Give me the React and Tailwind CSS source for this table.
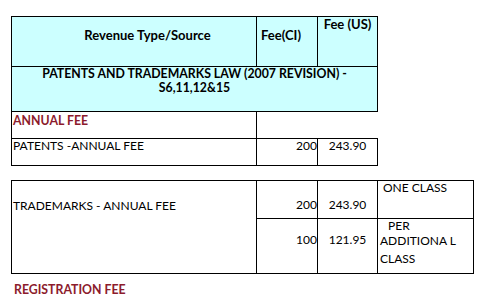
import React from "react";

const font = { fontFamily: "Lato, 'Liberation Sans', sans-serif" };

export default function App() {
  return (
    <div
      className="w-[484px] h-[305px] bg-white text-black pt-[16px] pl-[11px] text-[12px] leading-[14px] overflow-hidden"
      style={font}
    >
      {/* Table 1 */}
      <div className="grid grid-cols-[245px_61px_61px] w-[367px]">
        {/* Row A */}
        <div className="h-[50px] border-l border-t border-black bg-[#ccffff] font-bold text-[13px] text-center pl-[27px] pt-[11px]">
          Revenue Type/Source
        </div>
        <div className="h-[50px] border-l border-t border-black bg-[#ccffff] font-bold text-[13px] pl-[4px] pt-[11px]">
          Fee(CI)
        </div>
        <div className="h-[50px] border-l border-t border-r border-black bg-[#ccffff] font-bold text-[13px] text-center">
          Fee (US)
        </div>
        {/* Row B */}
        <div className="col-span-3 h-[45px] border-l border-t border-r border-black bg-[#ccffff] font-bold text-[12.3px] text-center">
          <div>PATENTS AND TRADEMARKS LAW (2007 REVISION) -</div>
          <div>S6,11,12&amp;15</div>
        </div>
        {/* Row C */}
        <div className="h-[27px] border-l border-t border-black font-bold text-[12.3px] text-[#8c1b2c] pl-px pt-[2px]">
          ANNUAL FEE
        </div>
        <div className="col-span-2 h-[27px] border-l border-t border-black"></div>
        {/* Row D */}
        <div className="h-[28px] border-l border-t border-b border-black pl-px">
          PATENTS -ANNUAL FEE
        </div>
        <div className="h-[28px] border-l border-t border-b border-black text-right">200</div>
        <div className="h-[28px] border-l border-t border-b border-r border-black text-center">243.90</div>
      </div>

      {/* Table 2 */}
      <div className="mt-[14px] grid grid-cols-[245px_61px_60px_97px] grid-rows-[38px_56px] w-[463px]">
        <div className="row-span-2 border-l border-t border-b border-black pl-px pt-[18px]">
          TRADEMARKS - ANNUAL FEE
        </div>
        <div className="border-l border-t border-black text-right pt-[17px]">200</div>
        <div className="border-l border-t border-black text-center pt-[17px]">243.90</div>
        <div className="border-l border-t border-r border-black pl-[5px]">ONE CLASS</div>
        <div className="border-l border-t border-b border-black text-right pt-[14px]">100</div>
        <div className="border-l border-t border-b border-black text-center pt-[14px]">121.95</div>
        <div className="border-l border-t border-b border-r border-black pl-[2px]">
          <div className="h-[15px] pl-[8px]">PER</div>
          <div className="h-[18px]">ADDITIONA L</div>
          <div>CLASS</div>
        </div>
      </div>

      <div className="mt-[9px] pl-[3px] font-bold text-[12.3px] text-[#8c1b2c]">REGISTRATION FEE</div>
    </div>
  );
}
